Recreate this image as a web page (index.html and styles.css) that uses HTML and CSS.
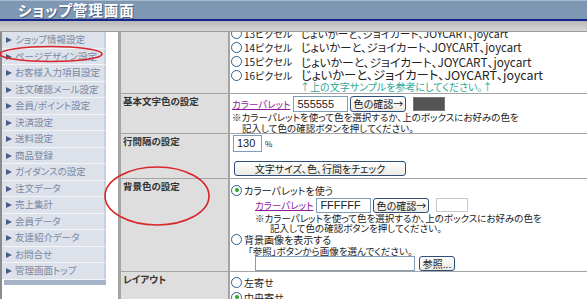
FILE: index.html
```html
<!DOCTYPE html>
<html lang="ja">
<head>
    <meta charset="UTF-8">
    <title>ショップ管理画面</title>
    <link rel="stylesheet" href="styles.css">
</head>
<body>
    <div class="header">
        <h1>ショップ管理画面</h1>
    </div>
    <div class="subbar"></div>

    <div class="page">
        <ul class="side">
            <li>ショップ情報設定</li>
            <li>ページデザイン設定</li>
            <li>お客様入力項目設定</li>
            <li>注文確認メール設定</li>
            <li>会員/ポイント設定</li>
            <li>決済設定</li>
            <li>送料設定</li>
            <li>商品登録</li>
            <li>ガイダンスの設定</li>
            <li>注文データ</li>
            <li>売上集計</li>
            <li>会員データ</li>
            <li>友達紹介データ</li>
            <li>お問合せ</li>
            <li>管理画面トップ</li>
            <li class="side-end"></li>
        </ul>

        <div class="main">
            <div class="form">
                <div class="row row-size">
                    <div class="label"></div>
                    <div class="value">
                        <div class="size-line"><span class="radio"></span><span class="px">13ピクセル</span><span class="sample s13">じょいかーと、ジョイカート、JOYCART、joycart</span></div>
                        <div class="size-line"><span class="radio"></span><span class="px">14ピクセル</span><span class="sample s14">じょいかーと、ジョイカート、JOYCART、joycart</span></div>
                        <div class="size-line"><span class="radio"></span><span class="px">15ピクセル</span><span class="sample s15">じょいかーと、ジョイカート、JOYCART、joycart</span></div>
                        <div class="size-line"><span class="radio"></span><span class="px">16ピクセル</span><span class="sample s16">じょいかーと、ジョイカート、JOYCART、joycart</span></div>
                        <div class="hint">↑上の文字サンプルを参考にしてください。↑</div>
                    </div>
                </div>

                <div class="row row-text">
                    <div class="label">基本文字色の設定</div>
                    <div class="value">
                        <div class="color-line">
                            <a class="palette">カラーパレット</a>
                            <span class="input w55">555555</span>
                            <span class="btn w56">色の確認→</span>
                            <span class="swatch dark"></span>
                        </div>
                        <div class="note">※カラーパレットを使って色を選択するか、上のボックスにお好みの色を</div>
                        <div class="note indent">記入して色の確認ボタンを押してください。</div>
                    </div>
                </div>

                <div class="row row-line">
                    <div class="label">行間隔の設定</div>
                    <div class="value">
                        <div class="line-input"><span class="input w29">130</span><span class="pct">%</span></div>
                        <div class="btn wide">文字サイズ、色、行間をチェック</div>
                    </div>
                </div>

                <div class="row row-bg">
                    <div class="label">背景色の設定</div>
                    <div class="value">
                        <div class="opt"><span class="radio on"></span>カラーパレットを使う</div>
                        <div class="sub">
                            <div class="color-line">
                                <a class="palette">カラーパレット</a>
                                <span class="input w55">FFFFFF</span>
                                <span class="btn w56">色の確認→</span>
                                <span class="swatch"></span>
                            </div>
                            <div class="note">※カラーパレットを使って色を選択するか、上のボックスにお好みの色を</div>
                            <div class="note indent2">記入して色の確認ボタンを押してください。</div>
                        </div>
                        <div class="opt"><span class="radio"></span>背景画像を表示する</div>
                        <div class="note ref">「参照」ボタンから画像を選んでください。</div>
                        <div class="file-line"><span class="input file"></span><span class="btn w36">参照...</span></div>
                    </div>
                </div>

                <div class="row row-layout">
                    <div class="label">レイアウト</div>
                    <div class="value">
                        <div class="opt"><span class="radio"></span>左寄せ</div>
                        <div class="opt"><span class="radio on"></span>中央寄せ</div>
                    </div>
                </div>
            </div>
        </div>
    </div>

    <svg class="marks" width="587" height="299" viewBox="0 0 587 299">
        <ellipse cx="51" cy="54" rx="51" ry="7.5" fill="none" stroke="#d9262b" stroke-width="1.6"/>
        <ellipse cx="157" cy="196" rx="52" ry="29" fill="none" stroke="#d9262b" stroke-width="1.6"/>
    </svg>
</body>
</html>
```

FILE: styles.css
```css
body {
    margin: 0;
    width: 587px;
    height: 299px;
    overflow: hidden;
    position: relative;
    font-family: "Noto Sans CJK JP", "Liberation Sans", sans-serif;
    font-feature-settings: "palt";
    font-size: 10px;
    color: #222;
    background: #fff;
}
.header {
    height: 21px;
    box-sizing: border-box;
    background: #7e98b4;
    border-top: 1px solid #a9bad0;
    border-bottom: 2px solid #13238a;
}
.header h1 {
    margin: 0;
    padding-left: 18px;
    font-size: 14.5px;
    line-height: 18px;
    letter-spacing: 1px;
    color: #fff;
    text-shadow: 1px 1px 0 #4d6280;
}
.subbar {
    height: 10px;
    background: linear-gradient(#b9b9b9, #d6d6d6);
    border-bottom: 1px solid #9b9b9b;
}
.page {
    display: flex;
    height: 267px;
    overflow: hidden;
}
.side {
    list-style: none;
    margin: 0;
    padding: 0;
    width: 104px;
    border-left: 2px solid #8c8c8c;
    flex-shrink: 0;
}
.side li {
    height: 15.5px;
    border-bottom: 1px solid #f4f5f8;
    background: #dde1ea;
    border-right: 2px solid #c3d0e0;
    color: #7888a3;
    font-size: 9.5px;
    line-height: 15.5px;
    padding-left: 13px;
    white-space: nowrap;
    overflow: hidden;
    position: relative;
}
.side li::before {
    content: "";
    position: absolute;
    left: 4px;
    top: 5px;
    width: 0;
    height: 0;
    border-left: 6px solid #4b5e85;
    border-top: 3px solid transparent;
    border-bottom: 3px solid transparent;
}
.side li.side-end {
    height: 5px;
    background: #a7b4c8;
    border: none;
    padding: 0;
    margin-left: 2px;
}
.side li.side-end::before {
    display: none;
}
.main {
    flex: 1;
    padding-left: 12px;
    overflow: hidden;
}
.form {
    margin-top: -10px;
    border-left: 3px solid #a4a4a4;
}
.row {
    display: grid;
    grid-template-columns: 109px 1fr;
    border-bottom: 1px solid #a4a4a4;
}
.label {
    background: #dedede;
    border-right: 2px solid #a4a4a4;
    padding: 1px 2px 0;
    font-weight: bold;
    color: #333;
    font-size: 9.5px;
    line-height: 12px;
}
.value {
    padding-left: 1px;
}
.radio {
    display: inline-block;
    width: 9px;
    height: 9px;
    border: 1px solid #295f8f;
    border-radius: 50%;
    background: #fff;
    margin-right: 2px;
    position: relative;
    flex-shrink: 0;
}
.radio.on::after {
    content: "";
    position: absolute;
    left: 2.5px;
    top: 2.5px;
    width: 4px;
    height: 4px;
    border-radius: 50%;
    background: #2aa52a;
}
.row-size .value {
    padding-top: 4px;
    padding-bottom: 1px;
}
.size-line {
    display: flex;
    align-items: center;
    height: 14px;
    white-space: nowrap;
}
.px {
    width: 57px;
    font-size: 10px;
}
.s13 { font-size: 10.6px; }
.s14 { font-size: 11.3px; }
.s15 { font-size: 11.8px; }
.s16 { font-size: 12.4px; }
.hint {
    padding-left: 69px;
    color: #2aa896;
    font-size: 10px;
    line-height: 10px;
    white-space: nowrap;
}
.color-line {
    display: flex;
    align-items: center;
    height: 16px;
}
.palette {
    color: #8b1c9b;
    text-decoration: underline;
    font-size: 9.5px;
    margin-right: 3px;
    white-space: nowrap;
}
.input {
    display: inline-block;
    height: 16px;
    box-sizing: border-box;
    border: 1px solid #7f9db9;
    background: #fff;
    font-family: "Liberation Sans", sans-serif;
    font-size: 11px;
    line-height: 14px;
    padding-left: 3px;
}
.w55 { width: 55px; }
.w29 { width: 29px; }
.btn {
    display: inline-block;
    height: 16px;
    box-sizing: border-box;
    border: 1px solid #2f4f7a;
    border-radius: 3px;
    background: linear-gradient(#ffffff, #ecebe4);
    text-align: center;
    font-size: 10px;
    line-height: 14px;
    margin-left: 2px;
    white-space: nowrap;
}
.w56 { width: 56px; }
.w36 { width: 36px; margin-left: 4px; }
.swatch {
    display: inline-block;
    width: 32px;
    height: 14px;
    margin-left: 7px;
    box-sizing: border-box;
    border: 1px solid #c8c8c8;
    background: #fff;
}
.swatch.dark {
    background: #555555;
    border-color: #777;
}
.row-text .value {
    padding: 2px 0 0 2px;
}
.note {
    font-size: 9.5px;
    line-height: 10.5px;
    white-space: nowrap;
}
.indent { padding-left: 10px; }
.indent2 { padding-left: 15px; }
.row-line .value {
    padding: 1px 0 2px 3px;
}
.line-input {
    display: flex;
    align-items: center;
    height: 17px;
}
.line-input .input {
    height: 17px;
}
.pct {
    font-size: 8px;
    margin-left: 3px;
}
.btn.wide {
    display: block;
    width: 172px;
    height: 15px;
    margin-top: 9px;
    margin-left: 1px;
    line-height: 13px;
}
.row-bg .value {
    padding-top: 4.5px;
}
.opt {
    display: flex;
    align-items: center;
    height: 13px;
    font-size: 10px;
    white-space: nowrap;
}
.sub {
    padding-left: 24px;
    padding-top: 1px;
}
.sub .color-line {
    height: 15px;
}
.sub .input, .sub .btn {
    height: 15px;
    line-height: 13px;
}
.sub .note {
    line-height: 10px;
}
.ref {
    padding-left: 17px;
    line-height: 10px;
}
.file-line {
    display: flex;
    align-items: center;
    height: 15px;
    padding-left: 24px;
}
.input.file {
    width: 160px;
    height: 15px;
}
.btn.w36 {
    height: 15px;
    line-height: 13px;
}
.row-layout .value {
    padding-top: 3px;
}
.row-layout .opt {
    height: 15px;
}
.marks {
    position: absolute;
    left: 0;
    top: 0;
    pointer-events: none;
}
```
